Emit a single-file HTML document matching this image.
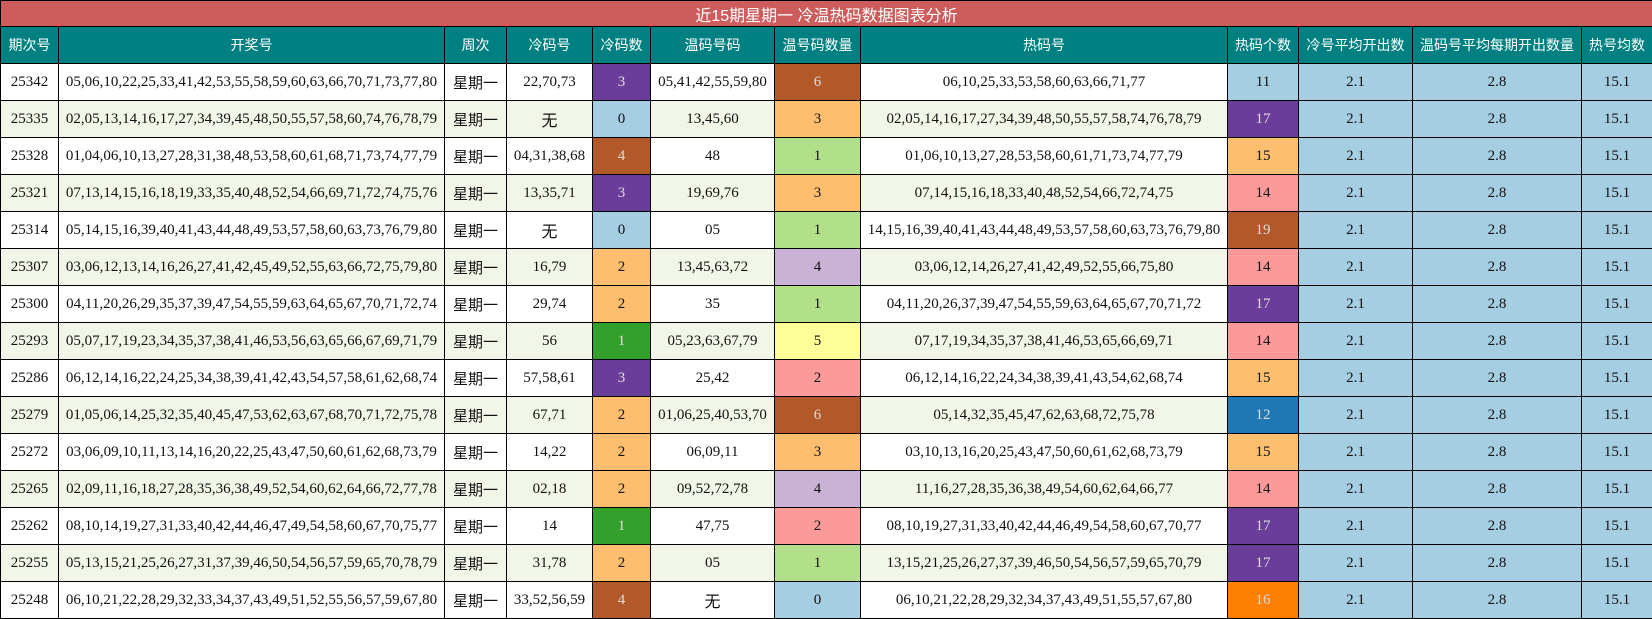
<!DOCTYPE html>
<html><head><meta charset="utf-8"><style>
body{margin:0;background:#fff;width:1652px;height:618px;overflow:hidden}
table{border-collapse:collapse;width:1652px;table-layout:fixed;font-family:"Liberation Serif","Noto Sans CJK SC",serif;font-size:15px;color:#111}
td,th{border:1px solid #000;text-align:center;padding:0;height:36px;white-space:nowrap;overflow:hidden}
.t td{background:#cd5c5c;color:#fff;height:25px;font-family:"Liberation Sans","Noto Sans CJK SC",sans-serif;font-size:16px}
th{background:#008080;color:#fff;font-weight:normal;font-family:"Liberation Sans","Noto Sans CJK SC",sans-serif;font-size:14px}
tr.a td{background:#f1f6e9}
.w{font-family:"Noto Sans CJK SC",sans-serif;font-size:15px}
.wu{font-family:"Noto Sans CJK SC",sans-serif;font-size:16px}
tr td.P{background:#6a3d9a;color:#ddd}tr td.L{background:#a6cee3}tr td.B{background:#b15928;color:#ddd}
tr td.K{background:#fdbf6f}tr td.G{background:#b2df8a}tr td.D{background:#33a02c;color:#ddd}
tr td.V{background:#cab2d6}tr td.Y{background:#ffff99}tr td.R{background:#fb9a99}
tr td.U{background:#1f78b4;color:#ddd}tr td.O{background:#ff7f00;color:#ddd}
</style></head><body>
<table>
<colgroup><col style="width:58px"><col style="width:386px"><col style="width:62px"><col style="width:86px"><col style="width:58px"><col style="width:124px"><col style="width:86px"><col style="width:367px"><col style="width:71px"><col style="width:114px"><col style="width:169px"><col style="width:71px"></colgroup>
<tr class="t"><td colspan="12">近15期星期一 冷温热码数据图表分析</td></tr>
<tr><th>期次号</th><th>开奖号</th><th>周次</th><th>冷码号</th><th>冷码数</th><th>温码号码</th><th>温号码数量</th><th>热码号</th><th>热码个数</th><th>冷号平均开出数</th><th>温码号平均每期开出数量</th><th>热号均数</th></tr>
<tr><td>25342</td><td>05,06,10,22,25,33,41,42,53,55,58,59,60,63,66,70,71,73,77,80</td><td class="w">星期一</td><td>22,70,73</td><td class="P">3</td><td>05,41,42,55,59,80</td><td class="B">6</td><td>06,10,25,33,53,58,60,63,66,71,77</td><td class="L">11</td><td class="L">2.1</td><td class="L">2.8</td><td class="L">15.1</td></tr>
<tr class="a"><td>25335</td><td>02,05,13,14,16,17,27,34,39,45,48,50,55,57,58,60,74,76,78,79</td><td class="w">星期一</td><td class="wu">无</td><td class="L">0</td><td>13,45,60</td><td class="K">3</td><td>02,05,14,16,17,27,34,39,48,50,55,57,58,74,76,78,79</td><td class="P">17</td><td class="L">2.1</td><td class="L">2.8</td><td class="L">15.1</td></tr>
<tr><td>25328</td><td>01,04,06,10,13,27,28,31,38,48,53,58,60,61,68,71,73,74,77,79</td><td class="w">星期一</td><td>04,31,38,68</td><td class="B">4</td><td>48</td><td class="G">1</td><td>01,06,10,13,27,28,53,58,60,61,71,73,74,77,79</td><td class="K">15</td><td class="L">2.1</td><td class="L">2.8</td><td class="L">15.1</td></tr>
<tr class="a"><td>25321</td><td>07,13,14,15,16,18,19,33,35,40,48,52,54,66,69,71,72,74,75,76</td><td class="w">星期一</td><td>13,35,71</td><td class="P">3</td><td>19,69,76</td><td class="K">3</td><td>07,14,15,16,18,33,40,48,52,54,66,72,74,75</td><td class="R">14</td><td class="L">2.1</td><td class="L">2.8</td><td class="L">15.1</td></tr>
<tr><td>25314</td><td>05,14,15,16,39,40,41,43,44,48,49,53,57,58,60,63,73,76,79,80</td><td class="w">星期一</td><td class="wu">无</td><td class="L">0</td><td>05</td><td class="G">1</td><td>14,15,16,39,40,41,43,44,48,49,53,57,58,60,63,73,76,79,80</td><td class="B">19</td><td class="L">2.1</td><td class="L">2.8</td><td class="L">15.1</td></tr>
<tr class="a"><td>25307</td><td>03,06,12,13,14,16,26,27,41,42,45,49,52,55,63,66,72,75,79,80</td><td class="w">星期一</td><td>16,79</td><td class="K">2</td><td>13,45,63,72</td><td class="V">4</td><td>03,06,12,14,26,27,41,42,49,52,55,66,75,80</td><td class="R">14</td><td class="L">2.1</td><td class="L">2.8</td><td class="L">15.1</td></tr>
<tr><td>25300</td><td>04,11,20,26,29,35,37,39,47,54,55,59,63,64,65,67,70,71,72,74</td><td class="w">星期一</td><td>29,74</td><td class="K">2</td><td>35</td><td class="G">1</td><td>04,11,20,26,37,39,47,54,55,59,63,64,65,67,70,71,72</td><td class="P">17</td><td class="L">2.1</td><td class="L">2.8</td><td class="L">15.1</td></tr>
<tr class="a"><td>25293</td><td>05,07,17,19,23,34,35,37,38,41,46,53,56,63,65,66,67,69,71,79</td><td class="w">星期一</td><td>56</td><td class="D">1</td><td>05,23,63,67,79</td><td class="Y">5</td><td>07,17,19,34,35,37,38,41,46,53,65,66,69,71</td><td class="R">14</td><td class="L">2.1</td><td class="L">2.8</td><td class="L">15.1</td></tr>
<tr><td>25286</td><td>06,12,14,16,22,24,25,34,38,39,41,42,43,54,57,58,61,62,68,74</td><td class="w">星期一</td><td>57,58,61</td><td class="P">3</td><td>25,42</td><td class="R">2</td><td>06,12,14,16,22,24,34,38,39,41,43,54,62,68,74</td><td class="K">15</td><td class="L">2.1</td><td class="L">2.8</td><td class="L">15.1</td></tr>
<tr class="a"><td>25279</td><td>01,05,06,14,25,32,35,40,45,47,53,62,63,67,68,70,71,72,75,78</td><td class="w">星期一</td><td>67,71</td><td class="K">2</td><td>01,06,25,40,53,70</td><td class="B">6</td><td>05,14,32,35,45,47,62,63,68,72,75,78</td><td class="U">12</td><td class="L">2.1</td><td class="L">2.8</td><td class="L">15.1</td></tr>
<tr><td>25272</td><td>03,06,09,10,11,13,14,16,20,22,25,43,47,50,60,61,62,68,73,79</td><td class="w">星期一</td><td>14,22</td><td class="K">2</td><td>06,09,11</td><td class="K">3</td><td>03,10,13,16,20,25,43,47,50,60,61,62,68,73,79</td><td class="K">15</td><td class="L">2.1</td><td class="L">2.8</td><td class="L">15.1</td></tr>
<tr class="a"><td>25265</td><td>02,09,11,16,18,27,28,35,36,38,49,52,54,60,62,64,66,72,77,78</td><td class="w">星期一</td><td>02,18</td><td class="K">2</td><td>09,52,72,78</td><td class="V">4</td><td>11,16,27,28,35,36,38,49,54,60,62,64,66,77</td><td class="R">14</td><td class="L">2.1</td><td class="L">2.8</td><td class="L">15.1</td></tr>
<tr><td>25262</td><td>08,10,14,19,27,31,33,40,42,44,46,47,49,54,58,60,67,70,75,77</td><td class="w">星期一</td><td>14</td><td class="D">1</td><td>47,75</td><td class="R">2</td><td>08,10,19,27,31,33,40,42,44,46,49,54,58,60,67,70,77</td><td class="P">17</td><td class="L">2.1</td><td class="L">2.8</td><td class="L">15.1</td></tr>
<tr class="a"><td>25255</td><td>05,13,15,21,25,26,27,31,37,39,46,50,54,56,57,59,65,70,78,79</td><td class="w">星期一</td><td>31,78</td><td class="K">2</td><td>05</td><td class="G">1</td><td>13,15,21,25,26,27,37,39,46,50,54,56,57,59,65,70,79</td><td class="P">17</td><td class="L">2.1</td><td class="L">2.8</td><td class="L">15.1</td></tr>
<tr><td>25248</td><td>06,10,21,22,28,29,32,33,34,37,43,49,51,52,55,56,57,59,67,80</td><td class="w">星期一</td><td>33,52,56,59</td><td class="B">4</td><td class="wu">无</td><td class="L">0</td><td>06,10,21,22,28,29,32,34,37,43,49,51,55,57,67,80</td><td class="O">16</td><td class="L">2.1</td><td class="L">2.8</td><td class="L">15.1</td></tr>
</table>
</body></html>
